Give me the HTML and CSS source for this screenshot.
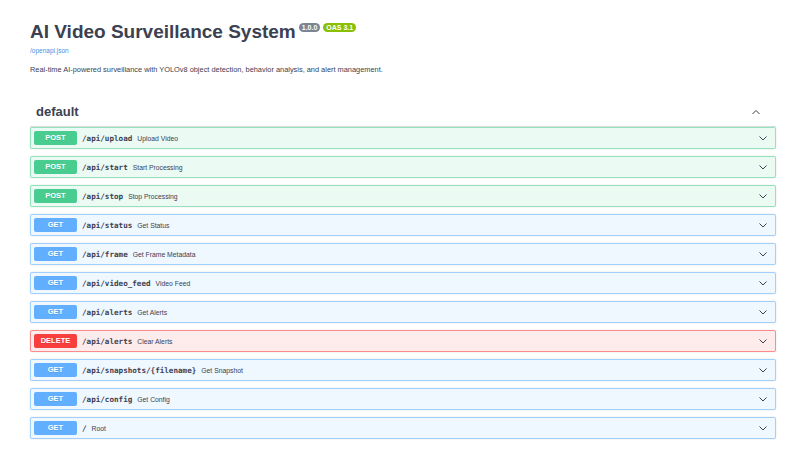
FILE: index.html
```html
<!DOCTYPE html>
<html lang="en">
<head>
  <meta charset="UTF-8">
  <meta name="viewport" content="width=device-width, initial-scale=1.0">
  <title>AI Video Surveillance System - Swagger UI</title>
  <link rel="stylesheet" href="styles.css">
</head>
<body>
  <div class="wrapper">
    <div class="info">
      <div class="title-row">
        <h1>AI Video Surveillance System</h1>
        <span class="version">1.0.0</span>
        <span class="oas">OAS 3.1</span>
      </div>
      <a class="spec-link" href="#">/openapi.json</a>
      <p class="description">Real-time AI-powered surveillance with YOLOv8 object detection, behavior analysis, and alert management.</p>
    </div>

    <div class="tag-section">
      <div class="tag-header">
        <h2>default</h2>
        <svg class="arrow" width="10" height="10" viewBox="0 0 20 20"><path d="M3 14l7-7 7 7" fill="none" stroke="#3b4151" stroke-width="2"/></svg>
      </div>

      <div class="opblock post">
        <span class="method">POST</span>
        <span class="path">/api/upload</span>
        <span class="summary">Upload Video</span>
        <svg class="arrow" width="10" height="10" viewBox="0 0 20 20"><path d="M3 7l7 7 7-7" fill="none" stroke="#3b4151" stroke-width="2"/></svg>
      </div>
      <div class="opblock post">
        <span class="method">POST</span>
        <span class="path">/api/start</span>
        <span class="summary">Start Processing</span>
        <svg class="arrow" width="10" height="10" viewBox="0 0 20 20"><path d="M3 7l7 7 7-7" fill="none" stroke="#3b4151" stroke-width="2"/></svg>
      </div>
      <div class="opblock post">
        <span class="method">POST</span>
        <span class="path">/api/stop</span>
        <span class="summary">Stop Processing</span>
        <svg class="arrow" width="10" height="10" viewBox="0 0 20 20"><path d="M3 7l7 7 7-7" fill="none" stroke="#3b4151" stroke-width="2"/></svg>
      </div>
      <div class="opblock get">
        <span class="method">GET</span>
        <span class="path">/api/status</span>
        <span class="summary">Get Status</span>
        <svg class="arrow" width="10" height="10" viewBox="0 0 20 20"><path d="M3 7l7 7 7-7" fill="none" stroke="#3b4151" stroke-width="2"/></svg>
      </div>
      <div class="opblock get">
        <span class="method">GET</span>
        <span class="path">/api/frame</span>
        <span class="summary">Get Frame Metadata</span>
        <svg class="arrow" width="10" height="10" viewBox="0 0 20 20"><path d="M3 7l7 7 7-7" fill="none" stroke="#3b4151" stroke-width="2"/></svg>
      </div>
      <div class="opblock get">
        <span class="method">GET</span>
        <span class="path">/api/video_feed</span>
        <span class="summary">Video Feed</span>
        <svg class="arrow" width="10" height="10" viewBox="0 0 20 20"><path d="M3 7l7 7 7-7" fill="none" stroke="#3b4151" stroke-width="2"/></svg>
      </div>
      <div class="opblock get">
        <span class="method">GET</span>
        <span class="path">/api/alerts</span>
        <span class="summary">Get Alerts</span>
        <svg class="arrow" width="10" height="10" viewBox="0 0 20 20"><path d="M3 7l7 7 7-7" fill="none" stroke="#3b4151" stroke-width="2"/></svg>
      </div>
      <div class="opblock delete">
        <span class="method">DELETE</span>
        <span class="path">/api/alerts</span>
        <span class="summary">Clear Alerts</span>
        <svg class="arrow" width="10" height="10" viewBox="0 0 20 20"><path d="M3 7l7 7 7-7" fill="none" stroke="#3b4151" stroke-width="2"/></svg>
      </div>
      <div class="opblock get">
        <span class="method">GET</span>
        <span class="path">/api/snapshots/{filename}</span>
        <span class="summary">Get Snapshot</span>
        <svg class="arrow" width="10" height="10" viewBox="0 0 20 20"><path d="M3 7l7 7 7-7" fill="none" stroke="#3b4151" stroke-width="2"/></svg>
      </div>
      <div class="opblock get">
        <span class="method">GET</span>
        <span class="path">/api/config</span>
        <span class="summary">Get Config</span>
        <svg class="arrow" width="10" height="10" viewBox="0 0 20 20"><path d="M3 7l7 7 7-7" fill="none" stroke="#3b4151" stroke-width="2"/></svg>
      </div>
      <div class="opblock get">
        <span class="method">GET</span>
        <span class="path">/</span>
        <span class="summary">Root</span>
        <svg class="arrow" width="10" height="10" viewBox="0 0 20 20"><path d="M3 7l7 7 7-7" fill="none" stroke="#3b4151" stroke-width="2"/></svg>
      </div>
    </div>
  </div>
</body>
</html>
```

FILE: styles.css
```css
body, html {
  margin: 0;
  padding: 0;
  background: #ffffff;
  font-family: "Liberation Sans", Arial, sans-serif;
  color: #3b4151;
}

.wrapper {
  padding: 0 30px;
}

.info {
  padding-top: 19px;
  margin-bottom: 23px;
}

.title-row {
  display: flex;
  align-items: flex-start;
}

h1 {
  margin: 0;
  font-size: 19px;
  line-height: 26px;
  font-weight: bold;
  color: #3b4151;
}

.version,
.oas {
  margin-top: 4px;
  padding: 1px 3px;
  border-radius: 5px;
  font-size: 7px;
  line-height: 7px;
  font-weight: bold;
  color: #fff;
}

.version {
  margin-left: 3px;
  background: #7d8492;
}

.oas {
  margin-left: 3px;
  background: #89bf04;
}

.spec-link {
  display: block;
  margin-top: 2px;
  font-size: 6.5px;
  color: #4990e2;
  text-decoration: none;
}

.description {
  margin: 11px 0 0;
  font-size: 7.4px;
  color: #3b4151;
}

.tag-header {
  display: flex;
  align-items: center;
  justify-content: space-between;
  padding: 5px 15px 5px 6px;
  border-bottom: 1px solid rgba(59, 65, 81, 0.15);
}

h2 {
  margin: 0;
  font-size: 13px;
  line-height: 19px;
  font-weight: bold;
  color: #3b4151;
}

.opblock {
  display: flex;
  align-items: center;
  height: 20px;
  padding: 0 3px;
  margin-bottom: 7px;
  border: 1px solid;
  border-radius: 2px;
  box-shadow: 0 0 2px rgba(0, 0, 0, 0.12);
}

.opblock:first-of-type {
  margin-top: 2px;
}

.opblock .arrow {
  margin-left: auto;
  margin-right: 4px;
}

.method {
  min-width: 43px;
  padding: 3px 0;
  border-radius: 2px;
  text-align: center;
  font-size: 7.5px;
  line-height: 8px;
  font-weight: bold;
  color: #fff;
  text-shadow: 0 1px 0 rgba(0, 0, 0, 0.1);
}

.path {
  padding: 0 5px 0 5px;
  font-family: "DejaVu Sans Mono", monospace;
  font-size: 7.6px;
  font-weight: bold;
  color: #3b4151;
}

.summary {
  font-size: 6.8px;
  color: #3b4151;
}

.post {
  background: rgba(73, 204, 144, 0.1);
  border-color: rgba(73, 204, 144, 0.55);
}

.post .method {
  background: #49cc90;
}

.get {
  background: rgba(97, 175, 254, 0.1);
  border-color: rgba(97, 175, 254, 0.55);
}

.get .method {
  background: #61affe;
}

.delete {
  background: rgba(249, 62, 62, 0.1);
  border-color: rgba(249, 62, 62, 0.55);
}

.delete .method {
  background: #f93e3e;
}
```
